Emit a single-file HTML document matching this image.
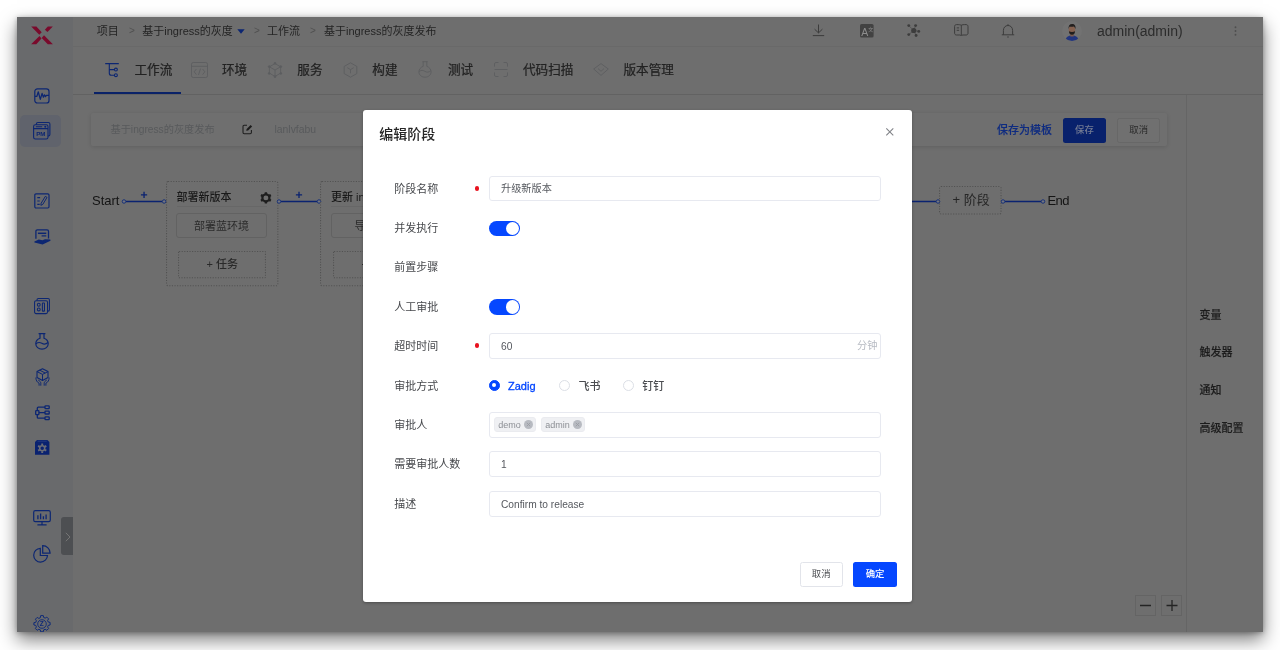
<!DOCTYPE html>
<html lang="zh-CN">
<head>
<meta charset="utf-8">
<title>编辑阶段 - 基于ingress的灰度发布</title>
<style>
*{box-sizing:border-box;margin:0;padding:0}
html,body{width:1280px;height:650px;overflow:hidden;background:#fff}
body{font-family:"Liberation Sans","Noto Sans CJK SC",sans-serif;color:#222;position:relative}
.win{position:absolute;left:17px;top:17px;width:1245.5px;height:615.3px;background:#6e6e6e;overflow:hidden}
.shadow{position:absolute;left:17px;top:17px;width:1245.5px;height:615.3px;box-shadow:0 8px 17px rgba(0,0,0,.5),0 1px 5px rgba(0,0,0,.3)}
.stage{position:absolute;left:-17px;top:-17px;width:1280px;height:650px;will-change:transform}
.stage *{position:absolute}
.t{white-space:nowrap;line-height:16px;height:16px}
svg{overflow:visible}
/* sidebar */
.sidebar{left:17px;top:17px;width:56px;height:616px;background:#696a6c}
.sb-active{left:20px;top:114.5px;width:41px;height:32.5px;border-radius:5px;background-color:#60636c}
.handle{left:60.5px;top:517px;width:12.5px;height:38px;background:#4d4f52;border-radius:3px 0 0 3px}
/* header */
.topbar{left:73px;top:17px;width:1190px;height:29.5px;background:#6e6e6e;border-bottom:1px solid #696969}
.tabsbar{left:73px;top:46.5px;width:1190px;height:48px;background:#6e6e6e;border-bottom:1px solid #626262}
.bc{font-size:11px;color:#242424;top:22.5px}
.bc.sep{color:#505050;font-size:10px}
.tab{font-size:12.6px;color:#222;top:61.5px;-webkit-text-stroke:.22px #222}
.tab-line{left:93.6px;top:92px;width:87.6px;height:2.1px;background:#0a2268}
.user{font-size:14px;color:#2c2c2c;left:1097px;top:22.5px}
/* content */
.rpanel{left:1186px;top:95px;width:77px;height:540px;border-left:1px solid #656565;background:#6e6e6e}
.rp{font-size:11px;font-weight:500;color:#1c1c1c;left:1199.5px;-webkit-text-stroke:.15px #1c1c1c}
.toolbar{left:91px;top:113px;width:1075.5px;height:33px;background:#6f6f6f;border-radius:2px;box-shadow:0 1px 4px rgba(0,0,0,.13)}
.tb-g{font-size:10.2px;color:#585a5c;top:121.8px}
.btn{border-radius:2.5px;font-size:9.4px;text-align:center;line-height:24px;height:24px;white-space:nowrap}
/* workflow */
.wf{font-size:13px;color:#141414;top:193.3px}
.line{height:1.2px;background:#0f2a78;top:200.6px}
.dot{width:4.4px;height:4.4px;border:1px solid #0f2a78;border-radius:50%;background:#6e6e6e;top:199px}
.plus{font-size:11px;font-weight:700;color:#0c2672;top:186.5px}
.stagebox{border:1px dotted #4c4c4c;border-radius:2px}
.stitle{font-size:11px;font-weight:500;color:#1a1a1a;top:189.3px}
.addtx{font-size:11px;font-weight:500;color:#2a2a2a;top:256.2px}
.sline{height:1px;background:#676767;top:206.2px}
.job{border:1px solid #626262;border-radius:3px;font-size:11px;color:#2b2b2b;text-align:center;line-height:24.6px;height:24.8px;top:213.2px;white-space:nowrap}
.addjob{border:1px dashed #515151;font-size:11px;color:#2b2b2b;text-align:center;line-height:25px;height:27px;top:251px;white-space:nowrap}
.zoombtn{top:595px;width:21px;height:21px;border:1px solid #646464}
/* dialog */
.dialog{left:363.2px;top:110px;width:549px;height:492px;background:#fff;border-radius:3px;box-shadow:0 1px 3px rgba(0,0,0,.3)}
.dtitle{font-size:14px;font-weight:500;color:#262626;left:379.3px;top:125.9px}
.lbl{font-size:11px;color:#46484c;left:394.300px}
.req{width:4.6px;height:4.6px;border-radius:50%;background:#e8121f;left:474.7px}
.inp{left:488.6px;width:392.6px;height:25px;border:1px solid #e7e9f0;border-radius:3px;background:#fff}
.itx{font-size:10.2px;color:#55585e;left:501px}
.sw{left:488.5px;width:31.5px;height:15.6px;border-radius:8px;background:#0547ff}
.sw i{right:1.2px;top:1.2px;width:13.2px;height:13.2px;border-radius:50%;background:#fff}
.radio{width:11.200px;height:11.200px;border-radius:50%;border:1px solid #dcdfe6;background:#fff;top:379.850px}
.radio.on{border-color:#0547ff;background:#0547ff}
.radio.on i{left:2.600px;top:2.600px;width:4px;height:4px;border-radius:50%;background:#fff}
.rl{font-size:11px;font-weight:500;color:#4a4c50;top:377.750px}
.tag{top:417px;height:15.3px;border-radius:3px;background:#eff0f3;border:1px solid #eaebef;font-size:9px;color:#8c8f95;line-height:14.6px;white-space:nowrap;padding-left:3.5px}
.tag b{right:1.300px;top:2.200px;width:9px;height:9px;border-radius:50%;background:#b7bac1}
</style>
</head>
<body>
<div class="shadow"></div>
<div class="win"><div class="stage">
<!--SIDEBAR-->
<div class="sidebar"></div>
<!-- logo -->
<svg style="left:31px;top:25.500px" width="22" height="19" viewBox="31 25.500 22 19"><g fill="#7a0a2c"><path d="M31.200 25.900h5.200l5.300 5.800-2.400 2.500z"/><path d="M47.800 25.900h5l-5.300 5.700-2.600-2.300z"/><path d="M31.100 43.800h5.200l5.200-5.700-2-2.700z"/><path d="M44 34.800l8.900 8.900h-5.100l-6.100-6.100z"/></g></svg>
<!-- 1 monitor wave -->
<svg style="left:34px;top:87.500px" width="16" height="16" viewBox="0 0 16 16" fill="none" stroke="#0c2672" stroke-width="1.200"><rect x=".8" y=".8" width="14.200" height="14.200" rx="2.600"/><path d="M1 8.400h1.900l1.400-4.600 2 7.600 1.800-6 1.300 3.800 1.100-2.400 1 1.800.9-1.200H15" stroke-width="1.250" stroke-linejoin="round"/></svg>
<!-- 2 PM window (active) -->
<div class="sb-active"></div>
<svg style="left:33px;top:122px" width="18" height="18" viewBox="0 0 18 18" fill="none" stroke="#0c2672" stroke-width="1.100"><path d="M3.400 2.700V2c0-.9.700-1.500 1.500-1.500h10.500c.9 0 1.500.7 1.500 1.500v10.500c0 .9-.6 1.500-1.500 1.500h-.6"/><rect x=".6" y="2.800" width="14.400" height="14.200" rx="1.800"/><path d="M.6 6.600h14.400M2.800 4.700h6.400" /><circle cx="12.300" cy="4.700" r=".5"/><text x="3.200" y="14.200" font-family="Liberation Sans, sans-serif" font-size="6.200" font-weight="700" fill="#0c2672" stroke="none">PM</text></svg>
<!-- 3 edit list -->
<svg style="left:34px;top:192.500px" width="16" height="16" viewBox="0 0 16 16" fill="none" stroke="#0c2672" stroke-width="1.200"><rect x=".8" y=".8" width="14.200" height="14.200" rx="1.200"/><path d="M3.300 4.600h2.800M3.300 8h2.400M3.300 11.400h2.400" stroke-width="1.100"/><path d="M11.300 3.400l1.700 1-4.200 7-1.900.9.200-2z" stroke-width="1" stroke-linejoin="round"/></svg>
<!-- 4 hand doc -->
<svg style="left:33.500px;top:228.500px" width="17" height="17" viewBox="0 0 17 17" fill="none" stroke="#0c2672" stroke-width="1.300"><path d="M1.900 9.700V2.300c0-.8.600-1.400 1.400-1.400h9.800c.8 0 1.400.6 1.400 1.400v7.200"/><path d="M3.900 4.300h8.400" stroke-width="1.500"/><path d="M7.600 6.900h4.700" stroke-width="1.200"/><path d="M.4 12.400l4.400-2 3.600.9 2.600-1 5.300.2.200 1.300-7.900 3.800-8.200-2z" fill="#0c2672" stroke="none"/></svg>
<!-- 5 stacked -->
<svg style="left:33.800px;top:297.800px" width="16.200" height="16.200" viewBox="0 0 17 17" fill="none" stroke="#0c2672" stroke-width="1.100"><path d="M3.200 2.700V2c0-.8.600-1.400 1.400-1.400h10.200c.8 0 1.400.6 1.400 1.400v10.400c0 .8-.6 1.400-1.400 1.400h-.5"/><rect x=".6" y="2.800" width="13.600" height="13.600" rx="1.600"/><circle cx="5" cy="7.100" r="1.500"/><circle cx="5" cy="12" r="1.500"/><rect x="8.800" y="5.200" width="2.200" height="8.600" rx=".5"/></svg>
<!-- 6 flask -->
<svg style="left:35px;top:333px" width="14" height="17" viewBox="0 0 14 17" fill="none" stroke="#0c2672" stroke-width="1.200"><path d="M3.600 .7h6.800M5 .9v4.400C2.500 6.200.8 8.300.8 10.700c0 3.100 2.700 5.500 6.200 5.500s6.200-2.400 6.200-5.500c0-2.400-1.700-4.500-4.200-5.400V.9"/><path d="M1 10.800c2-1.700 3.900-1.600 5.800-.5 1.900 1.100 4.100 1.100 6.200-.8" stroke-width="1.100"/></svg>
<!-- 7 box with hands -->
<svg style="left:34.500px;top:367.500px" width="15" height="19" viewBox="0 0 15 19" fill="none" stroke="#0c2672" stroke-width="1.100" stroke-linejoin="round"><path d="M7.500 .7l5.500 2.900v6L7.500 12.500 2 9.600v-6z"/><path d="M2 3.600l5.500 2.800L13 3.600M7.500 6.400v6.100M4.700 2.200l5.500 2.800" stroke-width="1"/><path d="M.9 9.500c0 2.800 1 4.600 3.200 5.700v2.500M5.800 17.700v-2.400c0-1.300-.9-2.300-2.600-3.300M14.100 9.500c0 2.800-1 4.600-3.200 5.700v2.500M9.200 17.700v-2.400c0-1.300.9-2.300 2.600-3.300" stroke-width=".95"/></svg>
<!-- 8 tree -->
<svg style="left:34.500px;top:404.500px" width="15" height="16" viewBox="0 0 15 16" fill="none" stroke="#0c2672" stroke-width="1.300"><rect x=".7" y="5.600" width="3.200" height="4" rx=".6"/><rect x="10" y=".8" width="4.200" height="2.800" rx=".6"/><rect x="10" y="6.200" width="4.200" height="2.800" rx=".6"/><rect x="10" y="11.800" width="4.200" height="2.800" rx=".6"/><path d="M3.900 7.600H10M10 2.200H3.300c-.6 0-1 .4-1 1v2.400M2.300 9.600v2.600c0 .6.400 1 1 1H10"/></svg>
<!-- 9 gear square filled -->
<svg style="left:34.800px;top:440.200px" width="14.400" height="14.800" viewBox="0 0 14.400 14.800"><path d="M2 0h10.400l2 2v12.800H0V2z" fill="#0a2270"/><path d="M2.600 1.200h9.200" stroke="#2c4186" stroke-width=".8"/><g fill="none" stroke="#6b6d76"><circle cx="7.200" cy="8.300" r="2.500" stroke-width="1.500"/><path d="M7.200 3.600v1.800M7.200 11.200v1.800M3.100 5.950l1.600.9M9.700 9.750l1.600.9M3.100 10.650l1.600-.9M9.700 6.850l1.600-.9" stroke-width="1.900"/></g></svg>
<!-- 10 monitor chart -->
<svg style="left:33px;top:509.500px" width="18" height="16" viewBox="0 0 18 16" fill="none" stroke="#0c2672" stroke-width="1.200"><rect x=".7" y=".7" width="16.600" height="11" rx="1.600"/><path d="M9 11.700v3M4.400 14.900h9.200"/><path d="M4.900 5.300v4M7.600 3.500v5.800M10.400 6.200v3.100M13.100 4.400v4.900" stroke-width="1.300"/></svg>
<!-- collapse handle -->
<div class="handle"></div>
<svg style="left:64.500px;top:531.500px" width="6" height="10" viewBox="0 0 6 10" fill="none" stroke="#757575" stroke-width="1"><path d="M.8 .8L5 5 .8 9.200"/></svg>
<!-- 11 pie -->
<svg style="left:33px;top:544.500px" width="18" height="18" viewBox="0 0 18 18" fill="none" stroke="#0c2672" stroke-width="1.200"><path d="M7.300 3.300C3.600 3.500.7 6.500.7 10.200c0 3.800 3.100 6.900 6.900 6.900 3.700 0 6.700-2.900 6.900-6.600H7.300z"/><path d="M9.700 .7v7.400h7.400C17.100 4 13.800.7 9.700.7z"/></svg>
<!-- 12 settings gear Z -->
<svg style="left:33px;top:614.500px" width="18" height="18" viewBox="0 0 18 18" fill="none" stroke="#0f2a78" stroke-width="1"><path d="M7.700 .6h2.600l.4 1.900 1.500.6 1.600-1 1.800 1.800-1 1.600.6 1.500 1.900.4v2.600l-1.900.4-.6 1.500 1 1.600-1.800 1.800-1.600-1-1.500.6-.4 1.900H7.700l-.4-1.900-1.500-.6-1.600 1-1.800-1.800 1-1.600-.6-1.500-1.900-.4V7.700l1.900-.4.600-1.500-1-1.600 1.800-1.800 1.600 1 1.500-.6z" stroke-linejoin="round"/><circle cx="9" cy="9" r="4.300" stroke-width=".9"/><text x="6.700" y="11.400" font-family="Liberation Sans, sans-serif" font-size="6.500" font-weight="700" fill="#0f2a78" stroke="none">Z</text></svg>
<!--/SIDEBAR-->
<!--HEADER-->
<div class="topbar"></div>
<div class="tabsbar"></div>
<span class="t bc" style="left:96.8px">项目</span>
<span class="t bc sep" style="left:129px">&gt;</span>
<span class="t bc" style="left:142.3px">基于ingress的灰度</span>
<svg style="left:236.5px;top:28.5px" width="8" height="5" viewBox="0 0 8 5"><path d="M0.3 0.2h7.4L4 4.8z" fill="#0c2672"/></svg>
<span class="t bc sep" style="left:254px">&gt;</span>
<span class="t bc" style="left:267px">工作流</span>
<span class="t bc sep" style="left:310px">&gt;</span>
<span class="t bc" style="left:324px">基于ingress的灰度发布</span>

<!-- top right icons -->
<svg style="left:812px;top:24px" width="13" height="13" viewBox="0 0 13 13" fill="none" stroke="#3c3c3c" stroke-width="1"><path d="M6.5 0.5v8.3M2.6 5.2l3.9 3.7 3.9-3.7M0.8 11.6h11.4"/></svg>
<svg style="left:859.500px;top:23.700px" width="14" height="14" viewBox="0 0 14 14"><rect x="0" y="0" width="13.600" height="13.600" rx="1.600" fill="#424242"/><text x="1.300" y="11.600" font-family="Liberation Sans, sans-serif" font-size="10.500" fill="#8e8e8e">A</text><text x="8.2" y="6.6" font-family="Liberation Sans, Noto Sans CJK SC, sans-serif" font-size="5" fill="#8a8a8a">文</text></svg>
<svg style="left:907px;top:24px" width="14" height="14" viewBox="0 0 14 14" fill="#3d3d3d"><g stroke="#4a4a4a" stroke-width=".7"><path d="M6.750 6.500L1.750 1.600M6.750 6.500L8.600 1.600M6.750 6.500L11.750 7.400M6.750 6.500L9.100 11.500M6.750 6.500L1.750 10.600"/></g><circle cx="6.750" cy="6.500" r="2.600"/><circle cx="1.750" cy="1.600" r="1.450"/><circle cx="8.600" cy="1.600" r="1.450"/><circle cx="11.750" cy="7.400" r="1.450"/><circle cx="9.100" cy="11.500" r="1.450"/><circle cx="1.750" cy="10.600" r="1.450"/></svg>
<svg style="left:953.5px;top:24.2px" width="15" height="13" viewBox="0 0 15 13" fill="none" stroke="#3c3c3c" stroke-width="1"><path d="M7.3 1.2v9.8M7.3 1.2C6.4.7 5 .6 2.6.6 1.4.6.6 1.3.6 2.4v6.8c0 1 .8 1.8 1.8 1.8h3.4c.8 0 1.3.5 1.5 1 .2-.5.7-1 1.5-1h3.4c1 0 1.8-.8 1.8-1.800V2.400c0-1.100-.8-1.800-2-1.800C9.600.6 8.200.7 7.300 1.200z"/><path d="M2.700 3.900h2.400M2.700 6.300h2.400"/></svg>
<svg style="left:1001px;top:24px" width="14" height="14" viewBox="0 0 14 14" fill="none" stroke="#3c3c3c" stroke-width="1"><path d="M0.800 10.800h12.400M2.400 10.800V6.400c0-2.800 1.900-4.900 4.600-4.900s4.600 2.100 4.600 4.900v4.400M7 .2v1.300"/><path d="M6.200 13h1.600" stroke-width="1.100"/></svg>
<!-- avatar -->
<svg style="left:1062px;top:20.5px" width="20" height="20" viewBox="0 0 20 20"><defs><clipPath id="avc"><circle cx="10" cy="10" r="10"/></clipPath></defs><circle cx="10" cy="10" r="10" fill="#727272"/><g clip-path="url(#avc)"><path d="M3.500 20c0-3.600 2.800-5.400 6.500-5.400s6.500 1.800 6.500 5.400z" fill="#22357f"/><rect x="8.300" y="11.500" width="3.400" height="4" fill="#7c5a4c"/><ellipse cx="10" cy="8.800" rx="3.300" ry="3.900" fill="#85614f"/><path d="M6.600 8.200c-.4-3.400 1-5.200 3.600-5.200 2.400 0 3.700 1.500 3.300 5.100-.5-1.500-1-2.300-1.600-2.700-1.300.5-3 .6-4.200.2-.5.600-.9 1.400-1.100 2.600z" fill="#23201f"/><path d="M7 10.200c.8.600 1.800.8 3 .8s2.200-.2 3-.8c0 2.300-1.200 3.600-3 3.600s-3-1.300-3-3.600z" fill="#211e1d"/></g></svg>
<span class="t user">admin(admin)</span>
<svg style="left:1234px;top:26px" width="3" height="10" viewBox="0 0 3 10" fill="#4e4e4e"><circle cx="1.500" cy="1.300" r=".95"/><circle cx="1.500" cy="5" r=".95"/><circle cx="1.500" cy="8.700" r=".95"/></svg>

<!-- tabs -->
<svg style="left:104.700px;top:63px" width="14" height="14.500" viewBox="0 0 14 14.500" fill="none" stroke="#0c2672" stroke-width="1.100"><path d="M.2 .6H13.800M4.300 .6v9.600c0 1.300.7 2 2 2h3.100M4.300 6.600h5.100"/><circle cx="10.900" cy="6.600" r="1.450"/><circle cx="10.900" cy="12.200" r="1.450"/></svg>
<span class="t tab" style="left:134.5px">工作流</span>
<div class="tab-line"></div>

<svg style="left:191px;top:61.500px" width="17" height="16" viewBox="0 0 17 16" fill="none" stroke="#5c5e60" stroke-width=".9"><rect x=".5" y=".5" width="16" height="15" rx="1.800"/><path d="M.5 4.300h16M5.400 7L3.200 9.800l2.200 2.800M11.600 7l2.200 2.800-2.200 2.800M9.500 6.600l-2 6.400"/></svg>
<span class="t tab" style="left:222px">环境</span>

<svg style="left:267px;top:61.500px" width="16" height="16" viewBox="0 0 16 16" fill="none" stroke="#5c5e60" stroke-width=".9"><path d="M8 1.600l5.600 3.200v6.400L8 14.400l-5.600-3.200V4.800zM2.400 4.800L8 8l5.600-3.200M8 8v6.400"/><circle cx="8" cy="1.300" r=".9" fill="#5c5e60"/><circle cx="2.200" cy="4.600" r=".9" fill="#5c5e60"/><circle cx="13.800" cy="4.600" r=".9" fill="#5c5e60"/><circle cx="2.200" cy="11.400" r=".9" fill="#5c5e60"/><circle cx="13.800" cy="11.400" r=".9" fill="#5c5e60"/><circle cx="8" cy="14.700" r=".9" fill="#5c5e60"/></svg>
<span class="t tab" style="left:297.300px">服务</span>

<svg style="left:342.500px;top:61.500px" width="15" height="16" viewBox="0 0 15 16" fill="none" stroke="#5c5e60" stroke-width=".9"><path d="M7.500 .8l6.300 3.600v7.200L7.500 15.200 1.200 11.600V4.400z"/><path d="M4.300 5.700l3.200 1.900 3.200-1.900M7.500 7.600v3.700"/></svg>
<span class="t tab" style="left:372.300px">构建</span>

<svg style="left:418px;top:61px" width="14" height="17" viewBox="0 0 14 17" fill="none" stroke="#5c5e60" stroke-width=".9"><path d="M4.400 .7h5.200M5.200 .7v4.600C2.600 6.300 .9 8.400 .9 10.900c0 3 2.700 5.300 6.100 5.300s6.100-2.300 6.100-5.300c0-2.500-1.700-4.600-4.300-5.600V.7"/><path d="M1.100 10.500c2.100-1.600 3.900-1.400 5.700-.2 1.800 1.200 4 1.200 6.100-.6"/></svg>
<span class="t tab" style="left:448px">测试</span>

<svg style="left:493.500px;top:62px" width="14" height="15" viewBox="0 0 14 15" fill="none" stroke="#5c5e60" stroke-width=".9"><path d="M.5 4.600V1.900C.5 1.100 1.100 .5 1.900 .5h2.600M9.500 .5h2.600c.8 0 1.400.6 1.400 1.400v2.700M13.500 10.400v2.700c0 .8-.6 1.400-1.400 1.400H9.500M4.500 14.500H1.900c-.8 0-1.400-.6-1.400-1.400v-2.700M.5 7.500h13"/></svg>
<span class="t tab" style="left:523px">代码扫描</span>

<svg style="left:593px;top:63px" width="16" height="13" viewBox="0 0 16 13" fill="none" stroke="#5c5e60" stroke-width=".9"><path d="M8 .6L15.300 6 8 12.400 .7 6z"/><path d="M5 5.600l3 2.700 3-2.700"/></svg>
<span class="t tab" style="left:623.500px">版本管理</span>
<!--/HEADER-->
<!--CONTENT-->
<div class="rpanel"></div>
<span class="t rp" style="top:306.500px">变量</span>
<span class="t rp" style="top:344px">触发器</span>
<span class="t rp" style="top:382px">通知</span>
<span class="t rp" style="top:419.500px">高级配置</span>

<div class="toolbar"></div>
<span class="t tb-g" style="left:110.500px">基于ingress的灰度发布</span>
<svg style="left:242px;top:123.500px" width="11" height="11" viewBox="0 0 11 11" fill="none" stroke="#1e1e1e" stroke-width="1.050"><path d="M5 1.300H2.200c-.7 0-1.200.5-1.200 1.200v6c0 .7.500 1.200 1.200 1.200h6c.7 0 1.200-.5 1.200-1.200V6"/><path d="M8.600 .9l1.500 1.500-4 4-1.900.4.400-1.900z" fill="#1c1c1c" stroke="none"/></svg>
<span class="t tb-g" style="left:274.500px;font-size:10.400px">lanlvfabu</span>
<span class="t" style="left:997px;top:121.500px;font-size:11px;font-weight:500;color:#0e2b80;-webkit-text-stroke:.12px #0e2b80">保存为模板</span>
<div class="btn" style="left:1063px;top:118.300px;width:43px;height:24.500px;line-height:24.500px;background:#08216c;color:#727a93;font-weight:500">保存</div>
<div class="btn" style="left:1117.200px;top:118.300px;width:43px;height:24.500px;border:1px solid #676767;color:#2a2a2a;line-height:22.500px;background:#707070">取消</div>

<!-- workflow graph -->
<span class="t wf" style="left:92px">Start</span>
<svg style="left:121.3px;top:192px" width="46.10000000000001" height="13" viewBox="0 0 46.10000000000001 13"><path d="M5 9.5H41.10000000000001" stroke="#0a2270" stroke-width="1.5"/><circle cx="3" cy="9.5" r="1.75" fill="#73757e" stroke="#0f2a78" stroke-width=".9"/><circle cx="43.10000000000001" cy="9.5" r="1.75" fill="#73757e" stroke="#0f2a78" stroke-width=".9"/><path d="M19.95 2.9h6.2M23.05 -.2v6.2" stroke="#0a2270" stroke-width="1.3"/></svg>
<svg style="left:165.5px;top:180.5px" width="112.4" height="105.4" viewBox="0 0 112.4 105.4"><rect x=".55" y=".55" width="111.30" height="104.30" rx="1.5" stroke="#515151" stroke-width="1.05" stroke-dasharray="1.1 1.5" fill="none"/></svg>
<span class="t stitle" style="left:176.500px">部署新版本</span>
<svg style="left:259.600px;top:192.100px" width="11.800" height="11.800" viewBox="-5.500 -5.500 11 11"><path d="M1.27 -4.16 L1.03 -5.30 L-1.03 -5.30 L-1.27 -4.16 L-2.97 -3.18 L-4.08 -3.54 L-5.11 -1.76 L-4.24 -0.98 L-4.24 0.98 L-5.11 1.76 L-4.08 3.54 L-2.97 3.18 L-1.27 4.16 L-1.03 5.30 L1.03 5.30 L1.27 4.16 L2.97 3.18 L4.08 3.54 L5.11 1.76 L4.24 0.98 L4.24 -0.98 L5.11 -1.76 L4.08 -3.54 L2.97 -3.18Z" fill="#1e1e1e"/><circle r="2.300" fill="#6e6e6e"/></svg>
<div class="sline" style="left:176.500px;width:90.500px"></div>
<div class="job" style="left:176.200px;width:90.700px">部署蓝环境</div>
<svg style="left:177.7px;top:250.6px" width="88" height="27.4" viewBox="0 0 88 27.4"><rect x=".55" y=".55" width="86.90" height="26.30" rx="0.5" stroke="#515151" stroke-width="1.05" stroke-dasharray="1.1 1.5" fill="none"/></svg>
<span class="t addtx" style="left:206.500px">+ 任务</span>
<svg style="left:276.2px;top:192px" width="46.0" height="13" viewBox="0 0 46.0 13"><path d="M5 9.5H41.0" stroke="#0a2270" stroke-width="1.5"/><circle cx="3" cy="9.5" r="1.75" fill="#73757e" stroke="#0f2a78" stroke-width=".9"/><circle cx="43.0" cy="9.5" r="1.75" fill="#73757e" stroke="#0f2a78" stroke-width=".9"/><path d="M19.90 2.9h6.2M23.00 -.2v6.2" stroke="#0a2270" stroke-width="1.3"/></svg>
<svg style="left:320.2px;top:180.5px" width="112.4" height="105.4" viewBox="0 0 112.4 105.4"><rect x=".55" y=".55" width="111.30" height="104.30" rx="1.5" stroke="#515151" stroke-width="1.05" stroke-dasharray="1.1 1.5" fill="none"/></svg>
<span class="t stitle" style="left:331px">更新 ingress</span>
<div class="sline" style="left:331px;width:90.500px"></div>
<div class="job" style="left:331.200px;width:90.700px">导流切换</div>
<svg style="left:332.7px;top:250.6px" width="88" height="27.4" viewBox="0 0 88 27.4"><rect x=".55" y=".55" width="86.90" height="26.30" rx="0.5" stroke="#515151" stroke-width="1.05" stroke-dasharray="1.1 1.5" fill="none"/></svg>
<span class="t addtx" style="left:361.500px">+ 任务</span>
<svg style="left:894.9px;top:192px" width="46.0" height="13" viewBox="0 0 46.0 13"><path d="M5 9.5H41.0" stroke="#0a2270" stroke-width="1.5"/><circle cx="3" cy="9.5" r="1.75" fill="#73757e" stroke="#0f2a78" stroke-width=".9"/><circle cx="43.0" cy="9.5" r="1.75" fill="#73757e" stroke="#0f2a78" stroke-width=".9"/></svg>
<svg style="left:938.9px;top:185.8px" width="62.6" height="28.6" viewBox="0 0 62.6 28.6"><rect x=".55" y=".55" width="61.50" height="27.50" rx="1.5" stroke="#515151" stroke-width="1.05" stroke-dasharray="1.1 1.5" fill="none"/></svg>
<span class="t" style="left:952.500px;top:192px;font-size:13px;color:#262626">+ 阶段</span>
<svg style="left:999.5px;top:192px" width="46.0" height="13" viewBox="0 0 46.0 13"><path d="M5 9.5H41.0" stroke="#0a2270" stroke-width="1.5"/><circle cx="3" cy="9.5" r="1.75" fill="#73757e" stroke="#0f2a78" stroke-width=".9"/><circle cx="43.0" cy="9.5" r="1.75" fill="#73757e" stroke="#0f2a78" stroke-width=".9"/></svg>
<span class="t wf" style="left:1047.500px;letter-spacing:-.6px">End</span>

<!-- zoom buttons -->
<div class="zoombtn" style="left:1135px"></div>
<div class="zoombtn" style="left:1161px"></div>
<svg style="left:1135px;top:595px" width="47" height="21" viewBox="0 0 47 21" stroke="#242424" stroke-width="1.300" fill="none"><path d="M5 10.500h11M31.500 10.500h11M37 5v11"/></svg>
<!--/CONTENT-->
<!--DIALOG-->
<div class="dialog"></div>
<span class="t dtitle">编辑阶段</span>
<svg style="left:886.400px;top:128.400px" width="7.600" height="7.600" viewBox="0 0 7.600 7.600" stroke="#808287" stroke-width="1.050" fill="none"><path d="M.3 .3l7 7M7.300 .3l-7 7"/></svg>

<span class="t lbl" style="top:180.500px">阶段名称</span>
<i class="req" style="top:186.200px"></i>
<div class="inp" style="top:176px"></div>
<span class="t itx" style="top:181.100px">升级新版本</span>

<span class="t lbl" style="top:219.800px">并发执行</span>
<div class="sw" style="top:220.900px"><i></i></div>

<span class="t lbl" style="top:259.4px">前置步骤</span>

<span class="t lbl" style="top:299.300px">人工审批</span>
<div class="sw" style="top:299.200px"><i></i></div>

<span class="t lbl" style="top:337.700px">超时时间</span>
<i class="req" style="top:343.400px"></i>
<div class="inp" style="top:333px;height:26px"></div>
<span class="t itx" style="top:338.500px">60</span>
<span class="t" style="left:857px;top:338.300px;font-size:10.200px;color:#b6bac2">分钟</span>

<span class="t lbl" style="top:377.750px">审批方式</span>
<div class="radio on" style="left:488.800px"><i></i></div>
<span class="t rl" style="left:508px;color:#0547ff;-webkit-text-stroke:.3px #0547ff">Zadig</span>
<div class="radio" style="left:559px"></div>
<span class="t rl" style="left:578.500px">飞书</span>
<div class="radio" style="left:623.300px"></div>
<span class="t rl" style="left:642.300px">钉钉</span>

<span class="t lbl" style="top:417px">审批人</span>
<div class="inp" style="top:412px;height:26px"></div>
<div class="tag" style="left:493.700px;width:42.100px">demo<b><svg style="left:0;top:0" width="9" height="9" viewBox="0 0 9 9" stroke="#9a9da4" stroke-width=".9"><path d="M2.800 2.800l3.400 3.400M6.200 2.800L2.800 6.200"/></svg></b></div>
<div class="tag" style="left:540.700px;width:44px">admin<b><svg style="left:0;top:0" width="9" height="9" viewBox="0 0 9 9" stroke="#9a9da4" stroke-width=".9"><path d="M2.800 2.800l3.400 3.400M6.200 2.800L2.800 6.200"/></svg></b></div>

<span class="t lbl" style="top:456px">需要审批人数</span>
<div class="inp" style="top:451px;height:26px"></div>
<span class="t itx" style="top:457px">1</span>

<span class="t lbl" style="top:495.900px">描述</span>
<div class="inp" style="top:491px;height:26px"></div>
<span class="t itx" style="top:496.600px">Confirm to release</span>

<div class="btn" style="left:799.500px;top:562px;width:43.500px;height:24.600px;border:1px solid #e2e4ea;color:#4a4c50;line-height:22.600px;background:#fff">取消</div>
<div class="btn" style="left:853.300px;top:562px;width:43.500px;height:24.600px;background:#0547ff;color:#fff;line-height:24.600px;font-weight:500">确定</div>
<!--/DIALOG-->
</div></div>
</body>
</html>
